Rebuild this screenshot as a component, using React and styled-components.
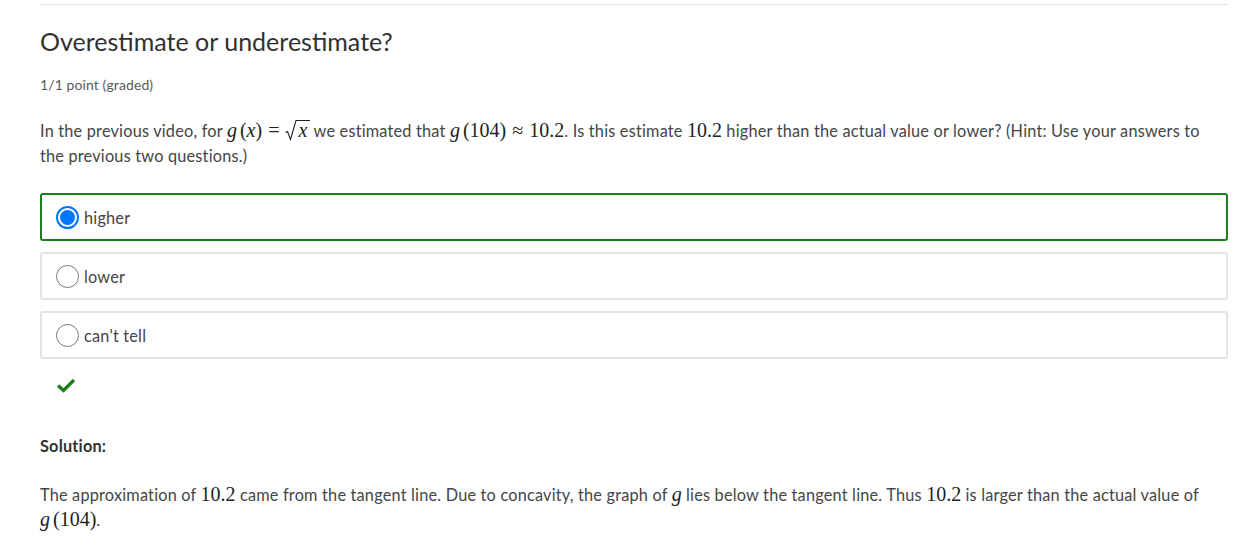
import React from "react";
import styled, { createGlobalStyle } from "styled-components";

const Global = createGlobalStyle`
  html, body { margin: 0; padding: 0; background: #fff; }
  body { font-family: Lato, "Noto Sans", sans-serif; color: #454545; }
`;

const Page = styled.div`
  margin: 0 16px 0 40px;
  padding-top: 4px;
`;

const Rule = styled.div`
  border-top: 1px solid #e2e2e2;
`;

const Title = styled.h2`
  margin: 22px 0 0;
  font-size: 25px;
  line-height: 29px;
  font-weight: 400;
  color: #313131;
`;

const Points = styled.div`
  margin-top: 19px;
  font-size: 14px;
  line-height: 20px;
  letter-spacing: 0.1px;
  color: #5a5a5a;
`;

const Para = styled.p`
  margin: ${(p) => p.$top}px 0 0;
  font-size: 16.3px;
  line-height: 25px;
  letter-spacing: 0.2px;
  color: #454545;
`;

const M = styled.span`
  font-family: "Liberation Serif", "DejaVu Serif", serif;
  font-size: 20px;
  letter-spacing: 0;
  color: #222;
  font-style: ${(p) => (p.$i ? "italic" : "normal")};
  margin: 0 ${(p) => p.$r || 0}px 0 ${(p) => p.$l || 0}px;
`;

const Sqrt = styled.span`
  display: inline-flex;
  align-items: stretch;
  vertical-align: -4px;
  height: 21px;
  margin-left: 6px;
  font-family: "Liberation Serif", "DejaVu Serif", serif;
  font-size: 20px;
  color: #222;
`;

const Under = styled.span`
  border-top: 1px solid #222;
  font-style: italic;
  line-height: 19px;
  padding: 0 2px 0 1px;
`;

const Options = styled.div`
  margin-top: 25px;
  display: flex;
  flex-direction: column;
  gap: 11px;
`;

const Option = styled.label`
  box-sizing: border-box;
  height: 48px;
  display: flex;
  align-items: center;
  gap: 5px;
  padding-left: 14px;
  border: 2px solid ${(p) => (p.$correct ? "#1e7e1e" : "#e3e3e3")};
  border-radius: 3px;
  font-size: 16.3px;
  letter-spacing: 0.2px;
  color: #454545;
`;

const Radio = styled.span`
  box-sizing: border-box;
  width: 23px;
  height: 23px;
  border-radius: 50%;
  flex: none;
  border: ${(p) => (p.$on ? "2px solid #0075ff" : "1.5px solid #767676")};
  display: flex;
  align-items: center;
  justify-content: center;
  background: #fff;
  &::after {
    content: "";
    display: ${(p) => (p.$on ? "block" : "none")};
    width: 15px;
    height: 15px;
    border-radius: 50%;
    background: #0075ff;
  }
`;

const Check = styled.div`
  margin: 16px 0 0 16px;
  height: 20px;
  display: flex;
  align-items: center;
`;

const SolTitle = styled.div`
  margin-top: 38px;
  font-size: 16.3px;
  line-height: 25px;
  letter-spacing: 0.2px;
  font-weight: 700;
  color: #313131;
`;

function Radical() {
  return (
    <svg width="12" height="21" viewBox="0 0 12 21" style={{ display: "block" }}>
      <path d="M0.5 12.5 L2.5 11.5 L5.5 19.5 L11 0.5 L12 0.5" fill="none" stroke="#222" strokeWidth="1.1" />
    </svg>
  );
}

export default function App() {
  return (
    <>
      <Global />
      <Page>
        <Rule />
        <Title>Overestimate or underestimate?</Title>
        <Points>1/1 point (graded)</Points>
        <Para $top={23}>
          In the previous video, for <M $i>g</M>
          <M $l={3}>(</M>
          <M $i>x</M>
          <M>)</M>
          <M $l={6} $r={0}>=</M>
          <Sqrt>
            <Radical />
            <Under>x</Under>
          </Sqrt>{" "}
          we estimated that <M $i>g</M>
          <M $l={3}>(104)</M>
          <M $l={6} $r={6}>≈</M>
          <M>10.2</M>. Is this estimate <M>10.2</M> higher than the actual value
          or lower? (Hint: Use your answers to the previous two questions.)
        </Para>
        <Options>
          <Option $correct>
            <Radio $on />
            higher
          </Option>
          <Option>
            <Radio />
            lower
          </Option>
          <Option>
            <Radio />
            can't tell
          </Option>
        </Options>
        <Check>
          <svg width="20" height="16" viewBox="0 0 20 16">
            <path d="M2 8.5 L7.5 13.5 L18 3" fill="none" stroke="#1e7e1e" strokeWidth="3.4" />
          </svg>
        </Check>
        <SolTitle>Solution:</SolTitle>
        <Para $top={24}>
          The approximation of <M>10.2</M> came from the tangent line. Due to
          concavity, the graph of <M $i>g</M> lies below the tangent line. Thus{" "}
          <M>10.2</M> is larger than the actual value of <M $i>g</M>
          <M $l={3}>(104)</M>.
        </Para>
      </Page>
    </>
  );
}
